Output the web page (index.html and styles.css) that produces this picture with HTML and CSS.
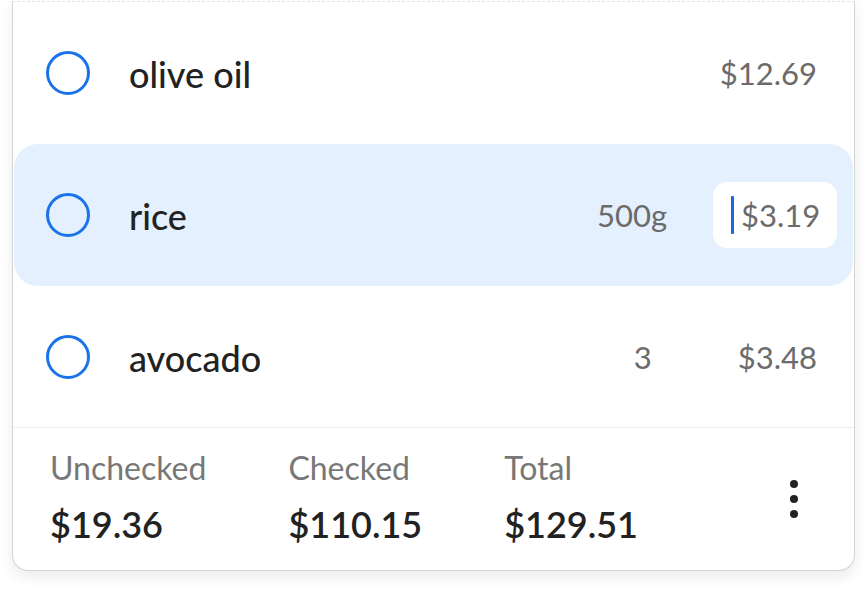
FILE: index.html
```html
<!DOCTYPE html>
<html>
<head>
<meta charset="utf-8">
<link rel="stylesheet" href="styles.css">
</head>
<body>
<div class="page">
  <div class="card">
    <div class="row">
      <span class="check"></span>
      <span class="name">olive oil</span>
      <span class="price">$12.69</span>
    </div>
    <div class="row active">
      <span class="check"></span>
      <span class="name">rice</span>
      <span class="qty">500g</span>
      <span class="price-input"><span class="caret"></span>$3.19</span>
    </div>
    <div class="row ruled">
      <span class="check"></span>
      <span class="name">avocado</span>
      <span class="qty">3</span>
      <span class="price">$3.48</span>
    </div>
    <div class="footer">
      <div class="stat">
        <span class="label">Unchecked</span>
        <span class="value">$19.36</span>
      </div>
      <div class="stat">
        <span class="label">Checked</span>
        <span class="value">$110.15</span>
      </div>
      <div class="stat">
        <span class="label">Total</span>
        <span class="value">$129.51</span>
      </div>
      <div class="kebab"><span></span><span></span><span></span></div>
    </div>
  </div>
</div>
</body>
</html>
```

FILE: styles.css
```css
html, body {
  margin: 0;
  padding: 0;
  background: #ffffff;
}
body {
  font-family: Lato, "Liberation Sans", sans-serif;
}
.page {
  padding: 1px 10px 20px 12px;
}
.card {
  width: 841px;
  border: 1px solid #d4d4d4;
  border-top: 1px dashed #e4e4e4;
  border-radius: 0 0 16px 16px;
  box-shadow: 0 6px 14px rgba(0, 0, 0, 0.08);
  background: #fff;
  box-sizing: content-box;
}
.row {
  height: 142px;
  display: flex;
  align-items: center;
  padding: 0 37px 0 33px;
  box-sizing: border-box;
}
.row.ruled {
  border-bottom: 1px solid #ececec;
}
.row.active {
  background: #e4f0fd;
  border-radius: 24px;
  margin: 0 1px;
  padding: 0 16px 0 32px;
}
.check {
  width: 44px;
  height: 44px;
  border: 3px solid #1a73e8;
  border-radius: 50%;
  box-sizing: border-box;
  flex: none;
}
.name {
  margin-left: 39px;
  font-size: 36px;
  font-weight: 500;
  color: #222;
  flex: 1;
  padding-top: 2px;
}
.qty {
  font-size: 31px;
  color: #6b6b6b;
  margin-right: 86px;
}
.active .qty {
  margin-right: 46px;
}
.price {
  font-size: 31px;
  color: #6b6b6b;
}
.price-input {
  display: flex;
  align-items: center;
  height: 66px;
  width: 124px;
  box-sizing: border-box;
  background: #fff;
  border-radius: 14px;
  padding-left: 18px;
  font-size: 31px;
  color: #6b6b6b;
}
.caret {
  width: 3px;
  height: 38px;
  background: #1a66e0;
  margin-right: 7px;
  border-radius: 1px;
}
.footer {
  height: 142px;
  display: flex;
  align-items: center;
  gap: 82px;
  padding: 0 56px 4px 37px;
  box-sizing: border-box;
}
.stat {
  display: flex;
  flex-direction: column;
  gap: 18px;
}
.label {
  font-size: 32px;
  line-height: 36px;
  color: #777;
}
.value {
  font-size: 36px;
  line-height: 40px;
  font-weight: 600;
  color: #222;
}
.kebab {
  margin-left: auto;
  display: flex;
  flex-direction: column;
  gap: 7px;
  margin-top: 4px;
}
.kebab span {
  width: 8px;
  height: 8px;
  border-radius: 50%;
  background: #222;
}
```
